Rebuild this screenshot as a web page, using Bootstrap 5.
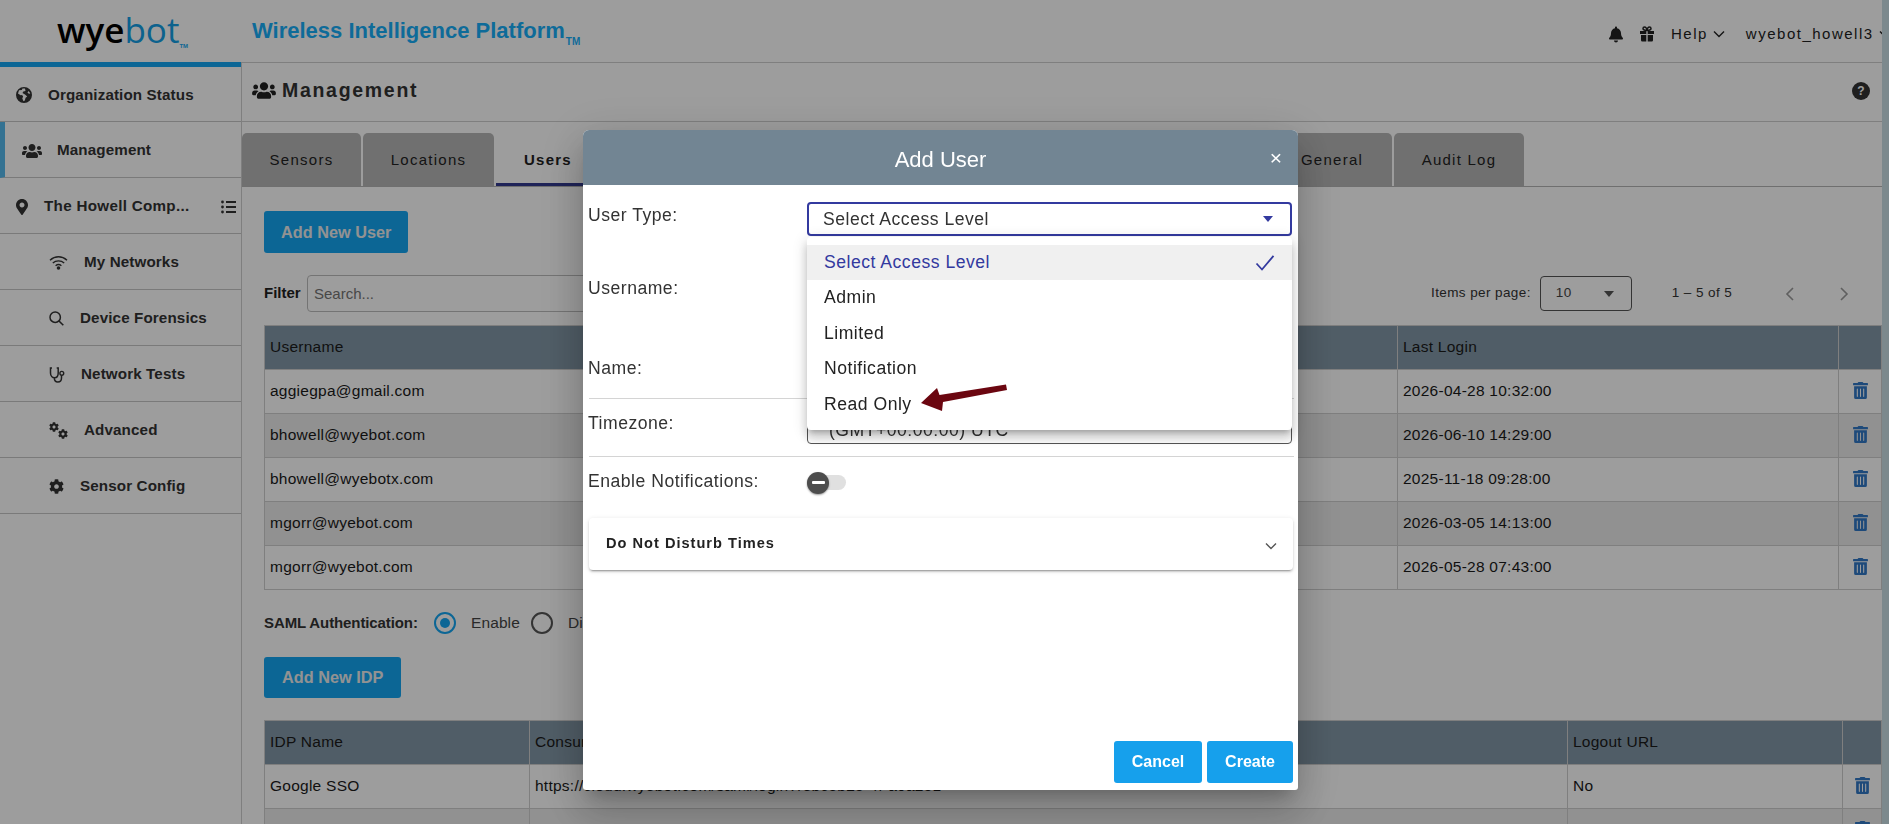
<!DOCTYPE html>
<html lang="en">
<head>
  <meta charset="UTF-8">
  <meta name="viewport" content="width=device-width, initial-scale=1">
  <title>Wyebot – Add User</title>
  <link href="https://cdn.jsdelivr.net/npm/bootstrap@5.3.3/dist/css/bootstrap.min.css" rel="stylesheet">
  <style>
    html, body { height: 100%; overflow: hidden; }
    body { font-family: "Liberation Sans", Arial, sans-serif; background: #c9dfe6; color: #222; font-size: 15px; }
    svg { display: block; fill: currentColor; flex: none; }
    .app-shell { width: 1882px; height: 824px; background: #fff; overflow: hidden; }

    /* top bar */
    .top-bar { height: 62px; flex: none; }
    .logo-box { width: 241px; padding-left: 57px; }
    .logo-text { font-family: "Open Sans", sans-serif; font-size: 35px; line-height: 1; color: #000; font-weight: 600; margin-top: -4px; }
    .logo-text span { color: #15a0e6; font-weight: 400; }
    .logo-tm { font-size: 6px; color: #17a7f0; align-self: flex-end; margin-bottom: 11px; font-weight: 700; }
    .title-box { flex: 1; min-width: 0; border-bottom: 1px solid #cfcfcf; height: 63px; padding-left: 11px; padding-right: 0; overflow: hidden; }
    .platform-title { color: #17aef8; font-weight: 700; font-size: 22px; margin-top: -2px; }
    .platform-title sub { font-size: 10px; bottom: -.75em; margin-left: 1px; }
    .top-actions { margin-left: auto; margin-top: 6px; white-space: nowrap; font-size: 15px; letter-spacing: 1.5px; color: #222; width: 273px; flex: none; }
    .user-name { margin-left: 20px; }

    /* side menu */
    .side-menu { width: 241px; flex: none; border-top: 5px solid #15a6f3; }
    .menu-row { height: 56px; border-bottom: 1px solid #c6c6c6; font-weight: 700; font-size: 15.2px; letter-spacing: .12px; color: #333; gap: 16px; padding-top: 2px; }
    .menu-row:first-child { height: 55px; }
    .menu-top { padding-left: 16px; }
    .menu-sub { padding-left: 49px; }
    .menu-active { border-left: 5px solid #55b9ee; padding-left: 17px; gap: 15px; }
    .side-menu .menu-place { padding-left: 16px; gap: 0; }
    .place-name { margin-left: 16px; letter-spacing: .3px; }
    .place-list { margin-left: auto; margin-right: 5px; }

    /* main area */
    .main-pane { flex: 1; min-width: 0; border-left: 1px solid #cfcfcf; }
    .page-head { height: 60px; border-bottom: 1px solid #cfcfcf; padding: 0 12px 2px 10px; flex: none; }
    .page-title { font-size: 19.5px; font-weight: 700; letter-spacing: 1.7px; color: #333; margin-left: 6px; }
    .help-dot { width: 18px; height: 18px; border-radius: 50%; background: #333; color: #fff; font-size: 12px; font-weight: 700; line-height: 18px; text-align: center; letter-spacing: 0; margin-left: auto; }
    .tab-strip { margin-top: 11px; height: 54px; border-bottom: 1px solid #b4b4b4; flex: none; gap: 2px; }
    .tab-item { height: 53px; background: #b7b7b7; border-radius: 5px 5px 0 0; font-size: 15px; letter-spacing: 1.25px; color: #222; line-height: 54px; text-align: center; }
    .tab-sensors { width: 119px; }
    .tab-locations { width: 131px; }
    .tab-users { width: 104px; background: transparent; border-radius: 0; font-weight: 700; border-bottom: 3px solid #333a8f; }
    .tab-filler { width: 668px; background: transparent; }
    .tab-general { width: 120px; }
    .tab-audit { width: 130px; }
    .pane-body { padding: 24px 2px 0 22px; }
    .btn-add { background: #15a6f3; color: #eee; font-weight: 700; font-size: 16.3px; height: 42px; padding: 0 17px; border: 0; border-radius: 3px; }
    .filter-row { margin-top: 22px; height: 37px; }
    .filter-label { font-weight: 700; font-size: 15px; width: 43px; color: #222; }
    .filter-input { width: 700px; height: 37px; border: 1px solid #bdbdbd; border-radius: 4px 0 0 4px; padding: 0 6px; font-size: 15px; color: #777; background: #fff; }
    .pager { margin-left: auto; width: 449px; font-size: 13.5px; letter-spacing: .4px; color: #333; }
    .page-size { width: 92px; height: 35px; border: 1px solid #555; border-radius: 4px; padding: 0 15px; margin-left: 9px; margin-right: 40px; color: #444; }
    .caret-down { width: 0; height: 0; border-left: 5px solid transparent; border-right: 5px solid transparent; border-top: 6px solid #555; margin-left: auto; margin-right: 2px; }
    .pager-arrows { margin-left: auto; gap: 44px; margin-right: 31px; color: #9a9a9a; }

    .data-table { table-layout: fixed; margin: 13px 0 0; width: 1617px; border-color: #cfcfcf; font-size: 15.5px; --bs-table-color: #1a1a1a; }
    .data-table th, .data-table td { height: 44px; padding: 0 5px 2px 5px; vertical-align: middle; font-weight: 400; letter-spacing: .25px; white-space: nowrap; overflow: hidden; }
    .data-table thead th { background: #8398a7; color: #1a1a1a; }
    .data-table tbody tr:nth-child(even) td { background: #ebebeb; }
    .trash-cell { color: #3178c6; }
    .trash-cell svg { margin: 0 auto; }

    .saml-row { margin-top: 22px; height: 22px; font-size: 15.5px; }
    .saml-label { font-weight: 700; color: #333; width: 170px; font-size: 15px; letter-spacing: -.1px; }
    .radio-ring { width: 22px; height: 22px; border-radius: 50%; border: 2px solid #555; }
    .radio-ring.is-on { border-color: #15a6f3; padding: 4px; }
    .radio-ring.is-on::before { content: ""; display: block; width: 10px; height: 10px; border-radius: 50%; background: #15a6f3; }
    .radio-text { color: #444; margin: 0 11px 0 15px; letter-spacing: .1px; }
    .btn-idp { margin-top: 23px; height: 41px; padding: 0 18px; }
    .idp-table { margin-top: 22px; }

    /* dialog */
    .modal-backdrop.show { opacity: .385; }
    .add-dialog { margin: 130px 0 0 583px; width: 715px; max-width: none; }
    .add-dialog .modal-content { height: 660px; border: 0; border-radius: 6px 6px 3px 3px; box-shadow: 0 11px 15px -7px rgba(0,0,0,.2), 0 24px 38px 3px rgba(0,0,0,.14), 0 9px 46px 8px rgba(0,0,0,.12); }
    .add-dialog .modal-header { height: 55px; background: #728593; color: #fff; border: 0; border-radius: 6px 6px 0 0; padding: 4px 16px 0; justify-content: center; flex: none; }
    .add-dialog .modal-title { font-size: 22px; line-height: 1; }
    .close-x { right: 16px; top: 18px; font-size: 21px; line-height: 20px; color: #fff; background: none; border: 0; padding: 0; }
    .add-dialog .modal-body { padding: 17px 3px 0 5px; flex: 1; }
    .form-line { width: 706px; font-size: 17.6px; letter-spacing: .5px; color: #333; line-height: 26px; }
    .form-line label { width: 219px; flex: none; }
    .field-box { flex: 1; height: 34px; border: 1px solid #555; border-radius: 4px; margin-right: 2px; padding: 0 15px; line-height: 32px; color: #333; }
    .field-focus { border: 2px solid #333a9f; padding: 0 14px; line-height: 30px; }
    .field-focus .caret-down { border-top-color: #333a9f; margin-right: 3px; }
    .field-tz { padding: 3px 21px 0; }
    .line-username { margin-top: 39px; }
    .line-name { margin-top: 46px; }
    .line-notify { margin-top: 11px; }
    .form-rule { width: 705px; margin: 0 0 0 1px; border: 0; border-top: 1px solid #d4d4d4; opacity: 1; }
    .rule-name { margin-top: 9px; margin-bottom: 11px; }
    .rule-tz { margin-top: 12px; }
    .notify-track { width: 39px; height: 15px; border-radius: 8px; background: #e0e0e0; margin-top: 7px; }
    .notify-thumb { width: 22px; height: 22px; border-radius: 50%; background: #4d4d4d; top: -3.5px; left: 0; box-shadow: 0 1px 2px rgba(0,0,0,.4); }
    .notify-thumb::before { content: ""; position: absolute; left: 5px; right: 4px; top: 9.5px; height: 3px; background: #fff; border-radius: 1px; }
    .dnd-panel { width: 704px; height: 52px; margin-top: 24px; margin-left: 1px; border: 0; border-radius: 4px; box-shadow: 0 3px 1px -2px rgba(0,0,0,.2), 0 2px 2px 0 rgba(0,0,0,.14), 0 1px 5px 0 rgba(0,0,0,.12); padding: 0 15px 0 17px; font-size: 14.6px; font-weight: 700; letter-spacing: 1px; color: #222; }
    .dnd-panel svg { color: #555; }
    .access-menu { left: 224px; top: 52px; width: 485px; height: 193px; padding: 8px 0; border: 0; border-radius: 4px; box-shadow: 0 5px 5px -3px rgba(0,0,0,.2), 0 8px 10px 1px rgba(0,0,0,.14), 0 3px 14px 2px rgba(0,0,0,.12); }
    .access-menu .dropdown-item { height: 35.4px; padding: 0 17px 0 17px; font-size: 17.6px; letter-spacing: .5px; color: #222; line-height: 35px; }
    .access-menu .dropdown-item.active { background: #f0f0f0; color: #333a9f; }
    .arrow-note { left: 112px; top: 145px; color: #6b0610; }
    .add-dialog .modal-footer { border: 0; padding: 0 5px 7px 0; gap: 5px; flex: none; }
    .btn-dialog { background: #16a0ec; color: #fff; font-weight: 700; font-size: 16px; height: 42px; border: 0; border-radius: 3px; margin: 0; padding: 0; }
    .btn-cancel { width: 88px; }
    .btn-create { width: 86px; }
  </style>
</head>
<body>
  <svg width="0" height="0" class="position-absolute">
    <symbol id="ic-users" viewBox="0 0 640 512"><path d="M96 224c35.300 0 64-28.700 64-64s-28.700-64-64-64-64 28.700-64 64 28.700 64 64 64zm448 0c35.300 0 64-28.700 64-64s-28.700-64-64-64-64 28.700-64 64 28.700 64 64 64zm32 32h-64c-17.600 0-33.500 7.100-45.100 18.600 40.300 22.100 68.900 62 75.100 109.400h66c17.700 0 32-14.300 32-32v-32c0-35.300-28.700-64-64-64zm-256 0c61.900 0 112-50.100 112-112S381.900 32 320 32 208 82.100 208 144s50.100 112 112 112zm76.800 32h-8.300c-20.800 10-43.900 16-68.500 16s-47.600-6-68.500-16h-8.300C179.600 288 128 339.600 128 403.200V432c0 26.500 21.500 48 48 48h288c26.500 0 48-21.500 48-48v-28.800c0-63.600-51.600-115.200-115.200-115.200zm-223.700-13.400C161.500 263.100 145.600 256 128 256H64c-35.300 0-64 28.700-64 64v32c0 17.700 14.300 32 32 32h65.900c6.300-47.400 34.900-87.300 75.200-109.400z"/></symbol>
    <symbol id="ic-cog" viewBox="0 0 512 512"><path d="M487.400 315.700l-42.600-24.600c4.300-23.200 4.300-47 0-70.200l42.600-24.600c4.900-2.800 7.100-8.600 5.500-14-11.100-35.600-30-67.800-54.700-94.600-3.800-4.100-10-5.100-14.800-2.300L380.800 110c-17.900-15.400-38.500-27.300-60.800-35.100V25.800c0-5.600-3.900-10.500-9.400-11.700-36.700-8.200-74.300-7.800-109.200 0-5.500 1.200-9.400 6.100-9.400 11.700V75c-22.200 7.900-42.800 19.800-60.800 35.100L88.700 85.500c-4.900-2.800-11-1.900-14.800 2.300-24.700 26.700-43.600 58.900-54.700 94.600-1.700 5.400.6 11.200 5.500 14L67.300 221c-4.300 23.200-4.300 47 0 70.200l-42.600 24.600c-4.900 2.800-7.100 8.600-5.500 14 11.100 35.600 30 67.800 54.700 94.600 3.800 4.100 10 5.100 14.800 2.300l42.600-24.600c17.900 15.400 38.500 27.300 60.800 35.100v49.200c0 5.600 3.900 10.500 9.400 11.700 36.700 8.200 74.300 7.800 109.200 0 5.500-1.200 9.400-6.100 9.400-11.700v-49.200c22.200-7.900 42.800-19.800 60.800-35.100l42.600 24.600c4.900 2.800 11 1.900 14.800-2.300 24.700-26.700 43.600-58.900 54.700-94.600 1.500-5.500-.7-11.300-5.600-14.100zM256 336c-44.100 0-80-35.900-80-80s35.900-80 80-80 80 35.900 80 80-35.900 80-80 80z"/></symbol>
    <symbol id="ic-trash" viewBox="0 0 448 512"><path d="M32 464a48 48 0 0 0 48 48h288a48 48 0 0 0 48-48V128H32zm272-256a16 16 0 0 1 32 0v224a16 16 0 0 1-32 0zm-96 0a16 16 0 0 1 32 0v224a16 16 0 0 1-32 0zm-96 0a16 16 0 0 1 32 0v224a16 16 0 0 1-32 0zM432 32H312l-9.400-18.700A24 24 0 0 0 281.100 0H166.800a23.720 23.720 0 0 0-21.400 13.300L136 32H16A16 16 0 0 0 0 48v32a16 16 0 0 0 16 16h416a16 16 0 0 0 16-16V48a16 16 0 0 0-16-16z"/></symbol>
    <symbol id="ic-chev" viewBox="0 0 14 14"><path d="M2 4.500 7 9.500 12 4.500" fill="none" stroke="currentColor" stroke-width="1.400"/></symbol>
  </svg>

  <div class="app-shell d-flex flex-column">
    <!-- top bar -->
    <header class="top-bar d-flex">
      <div class="logo-box d-flex align-items-center">
        <div class="logo-text">wye<span>bot</span></div>
        <div class="logo-tm">TM</div>
      </div>
      <div class="title-box d-flex align-items-center">
        <div class="platform-title">Wireless Intelligence Platform<sub>TM</sub></div>
        <div class="top-actions d-flex align-items-center">
          <svg width="14" height="17" viewBox="0 0 448 512"><path d="M224 512c35.320 0 63.970-28.650 63.970-64H160.030c0 35.350 28.650 64 63.970 64zm215.390-149.710c-19.320-20.760-55.470-51.990-55.470-154.290 0-77.700-54.480-139.900-127.940-155.160V32c0-17.670-14.320-32-31.980-32s-31.980 14.330-31.980 32v20.840C118.560 68.100 64.080 130.300 64.080 208c0 102.300-36.150 133.530-55.470 154.290-6 6.450-8.660 14.160-8.610 21.710.11 16.400 12.980 32 32.100 32h383.800c19.120 0 32-15.600 32.100-32 .05-7.550-2.610-15.270-8.610-21.710z"/></svg>
          <svg class="ms-3" width="16" height="16" viewBox="0 0 16 16"><path d="M1 5h6.300v3H1zM8.700 5H15v3H8.700zM2 9h5.300v6.500H3.200A1.200 1.200 0 0 1 2 14.300zM8.700 9H14v5.300a1.200 1.200 0 0 1-1.200 1.200H8.700z"/><path d="M8 4.500C6.500 4.500 4 4.300 4 2.600 4 1.500 5 1 5.700 1 7 1 7.700 2.800 8 4c.3-1.200 1-3 2.300-3 .7 0 1.700.5 1.700 1.600 0 1.700-2.500 1.900-4 1.900z" fill="none" stroke="currentColor" stroke-width="1.500"/></svg>
          <span class="ms-3">Help</span>
          <svg class="ms-1" width="14" height="14"><use href="#ic-chev"/></svg>
          <span class="user-name">wyebot_howell3</span>
          <svg class="ms-1" width="14" height="14"><use href="#ic-chev"/></svg>
        </div>
      </div>
    </header>

    <div class="d-flex flex-fill">
      <!-- side menu -->
      <nav class="side-menu">
        <div class="menu-row menu-top d-flex align-items-center">
          <svg width="16" height="16" viewBox="0 0 16 16"><path fill-rule="evenodd" d="M8 0a8 8 0 1 1 0 16A8 8 0 0 1 8 0zM3 3.200 2 6.500l2.600 1.800 1.500-.2 1 1.300-.8 2 1.200 2.800 1.300-.6.800-2.800 1.600-1.300-2.200-2L6.500 6l.8-1.500L9.500 4 9 1.600 6.500 1.400 5.800 3zM12.500 4l-1 1.800 1.500 1 1.300-.2A6.600 6.600 0 0 0 12.500 4z"/></svg>
          <span>Organization Status</span>
        </div>
        <div class="menu-row menu-active d-flex align-items-center">
          <svg width="20" height="16"><use href="#ic-users"/></svg>
          <span>Management</span>
        </div>
        <div class="menu-row menu-place d-flex align-items-center">
          <svg width="12" height="16" viewBox="0 0 384 512"><path d="M172.268 501.670C26.970 291.031 0 269.413 0 192 0 85.961 85.961 0 192 0s192 85.961 192 192c0 77.413-26.970 99.031-172.268 309.670-9.535 13.774-29.930 13.773-39.464 0zM192 272c44.183 0 80-35.817 80-80s-35.817-80-80-80-80 35.817-80 80 35.817 80 80 80z"/></svg>
          <span class="place-name">The Howell Comp...</span>
          <svg class="place-list" width="15" height="14" viewBox="0 0 15 14"><circle cx="1.500" cy="2" r="1.400"/><circle cx="1.500" cy="7" r="1.400"/><circle cx="1.500" cy="12" r="1.400"/><path d="M5 1h10v2H5zM5 6h10v2H5zM5 11h10v2H5z"/></svg>
        </div>
        <div class="menu-row menu-sub d-flex align-items-center">
          <svg width="19" height="15" viewBox="0 0 19 15"><path d="M1 5.200C6 .6 13 .6 18 5.200M3.800 8C7 5.200 12 5.200 15.200 8M6.600 10.700c1.700-1.300 4.100-1.300 5.800 0" fill="none" stroke="currentColor" stroke-width="1.400"/><circle cx="9.500" cy="13" r="1.800"/></svg>
          <span>My Networks</span>
        </div>
        <div class="menu-row menu-sub d-flex align-items-center">
          <svg width="15" height="15" viewBox="0 0 15 15"><circle cx="6.200" cy="6.200" r="5.200" fill="none" stroke="currentColor" stroke-width="1.500"/><path d="M10 10l4.300 4.300" fill="none" stroke="currentColor" stroke-width="1.600"/></svg>
          <span>Device Forensics</span>
        </div>
        <div class="menu-row menu-sub d-flex align-items-center">
          <svg width="16" height="16" viewBox="0 0 16 16"><path d="M3 1H1.500v5c0 3 2 4.800 4 4.800s3.700-1.800 3.700-4.800V1H7.700M5.300 10.800c0 2.500 1.300 4.200 3.500 4.200s3.700-1.500 3.700-4V8.500" fill="none" stroke="currentColor" stroke-width="1.500"/><circle cx="12.800" cy="6.300" r="1.900" fill="none" stroke="currentColor" stroke-width="1.400"/></svg>
          <span>Network Tests</span>
        </div>
        <div class="menu-row menu-sub d-flex align-items-center">
          <svg width="19" height="17" viewBox="0 0 19 17"><use href="#ic-cog" x="0" y="0" width="10" height="10"/><use href="#ic-cog" x="9" y="7" width="10" height="10"/></svg>
          <span>Advanced</span>
        </div>
        <div class="menu-row menu-sub d-flex align-items-center">
          <svg width="15" height="15"><use href="#ic-cog"/></svg>
          <span>Sensor Config</span>
        </div>
      </nav>

      <!-- main -->
      <main class="main-pane d-flex flex-column">
        <div class="page-head d-flex align-items-center">
          <svg width="24" height="19"><use href="#ic-users"/></svg>
          <span class="page-title">Management</span>
          <span class="help-dot">?</span>
        </div>
        <div class="tab-strip d-flex">
          <div class="tab-item tab-sensors">Sensors</div>
          <div class="tab-item tab-locations">Locations</div>
          <div class="tab-item tab-users">Users</div>
          <div class="tab-item tab-filler"></div>
          <div class="tab-item tab-general">General</div>
          <div class="tab-item tab-audit">Audit Log</div>
        </div>

        <div class="pane-body">
          <button class="btn-add d-block">Add New User</button>
          <div class="filter-row d-flex align-items-center">
            <span class="filter-label">Filter</span>
            <input class="filter-input" placeholder="Search...">
            <div class="pager d-flex align-items-center">
              <span>Items per page:</span>
              <div class="page-size d-flex align-items-center"><span>10</span><i class="caret-down"></i></div>
              <span>1 – 5 of 5</span>
              <div class="pager-arrows d-flex">
                <svg width="10" height="16" viewBox="0 0 10 16"><path d="M8 2 2 8l6 6" fill="none" stroke="currentColor" stroke-width="1.600"/></svg>
                <svg width="10" height="16" viewBox="0 0 10 16"><path d="M2 2l6 6-6 6" fill="none" stroke="currentColor" stroke-width="1.600"/></svg>
              </div>
            </div>
          </div>

          <table class="table table-bordered data-table">
            <colgroup><col style="width:1133px"><col style="width:441px"><col style="width:43px"></colgroup>
            <thead><tr><th>Username</th><th>Last Login</th><th></th></tr></thead>
            <tbody>
              <tr><td>aggiegpa@gmail.com</td><td>2026-04-28 10:32:00</td><td class="trash-cell"><svg width="15" height="17"><use href="#ic-trash"/></svg></td></tr>
              <tr><td>bhowell@wyebot.com</td><td>2026-06-10 14:29:00</td><td class="trash-cell"><svg width="15" height="17"><use href="#ic-trash"/></svg></td></tr>
              <tr><td>bhowell@wyebotx.com</td><td>2025-11-18 09:28:00</td><td class="trash-cell"><svg width="15" height="17"><use href="#ic-trash"/></svg></td></tr>
              <tr><td>mgorr@wyebot.com</td><td>2026-03-05 14:13:00</td><td class="trash-cell"><svg width="15" height="17"><use href="#ic-trash"/></svg></td></tr>
              <tr><td>mgorr@wyebot.com</td><td>2026-05-28 07:43:00</td><td class="trash-cell"><svg width="15" height="17"><use href="#ic-trash"/></svg></td></tr>
            </tbody>
          </table>

          <div class="saml-row d-flex align-items-center">
            <span class="saml-label">SAML Authentication:</span>
            <span class="radio-ring is-on"></span><span class="radio-text">Enable</span>
            <span class="radio-ring"></span><span class="radio-text">Disable</span>
          </div>

          <button class="btn-add btn-idp d-block">Add New IDP</button>

          <table class="table table-bordered data-table idp-table">
            <colgroup><col style="width:265px"><col style="width:1038px"><col style="width:275px"><col style="width:39px"></colgroup>
            <thead><tr><th>IDP Name</th><th>Consumer URL</th><th>Logout URL</th><th></th></tr></thead>
            <tbody>
              <tr><td>Google SSO</td><td>https://cloud.wyebot.com/saml/login?rebc5b25-4f-a0a251</td><td>No</td><td class="trash-cell"><svg width="15" height="17"><use href="#ic-trash"/></svg></td></tr>
              <tr><td>Azure SSO</td><td>https://cloud.wyebot.com/saml/login?8f31ac7e-2d-b7e904</td><td>No</td><td class="trash-cell"><svg width="15" height="17"><use href="#ic-trash"/></svg></td></tr>
            </tbody>
          </table>
        </div>
      </main>
    </div>
  </div>

  <div class="modal-backdrop show"></div>

  <!-- Add User dialog -->
  <div class="modal d-block" tabindex="-1">
    <div class="modal-dialog add-dialog">
      <div class="modal-content">
        <div class="modal-header">
          <h5 class="modal-title fw-normal">Add User</h5>
          <button class="close-x position-absolute" type="button">×</button>
        </div>
        <div class="modal-body position-relative">
          <div class="form-line d-flex">
            <label>User Type:</label>
            <div class="field-box field-focus d-flex align-items-center"><span>Select Access Level</span><i class="caret-down"></i></div>
          </div>
          <div class="form-line line-username d-flex">
            <label>Username:</label>
            <div class="field-box"></div>
          </div>
          <div class="form-line line-name d-flex">
            <label>Name:</label>
            <div class="field-box"></div>
          </div>
          <hr class="form-rule rule-name">
          <div class="form-line d-flex">
            <label>Timezone:</label>
            <div class="field-box field-tz">(GMT+00:00:00) UTC</div>
          </div>
          <hr class="form-rule rule-tz">
          <div class="form-line line-notify d-flex">
            <label>Enable Notifications:</label>
            <div class="notify-track position-relative"><span class="notify-thumb position-absolute"></span></div>
          </div>
          <div class="card dnd-panel d-flex flex-row align-items-center justify-content-between">
            <span>Do Not Disturb Times</span>
            <svg class="mt-1" width="14" height="14"><use href="#ic-chev"/></svg>
          </div>

          <ul class="dropdown-menu show access-menu">
            <li class="dropdown-item active d-flex align-items-center justify-content-between">
              <span>Select Access Level</span>
              <svg width="20" height="18" viewBox="0 0 20 18"><path d="M1.500 9.500 7 15.500 18.500 1.800" fill="none" stroke="currentColor" stroke-width="1.800"/></svg>
            </li>
            <li class="dropdown-item">Admin</li>
            <li class="dropdown-item">Limited</li>
            <li class="dropdown-item">Notification</li>
            <li class="dropdown-item">Read Only</li>
            <svg class="arrow-note position-absolute" width="90" height="32" viewBox="0 0 90 32"><path d="M2 21 18 6 20.500 13 87 2.500 88 8 24 20 23 29z"/></svg>
          </ul>
        </div>
        <div class="modal-footer">
          <button class="btn-dialog btn-cancel">Cancel</button>
          <button class="btn-dialog btn-create">Create</button>
        </div>
      </div>
    </div>
  </div>

  <script src="https://cdn.jsdelivr.net/npm/bootstrap@5.3.3/dist/js/bootstrap.bundle.min.js"></script>
</body>
</html>
